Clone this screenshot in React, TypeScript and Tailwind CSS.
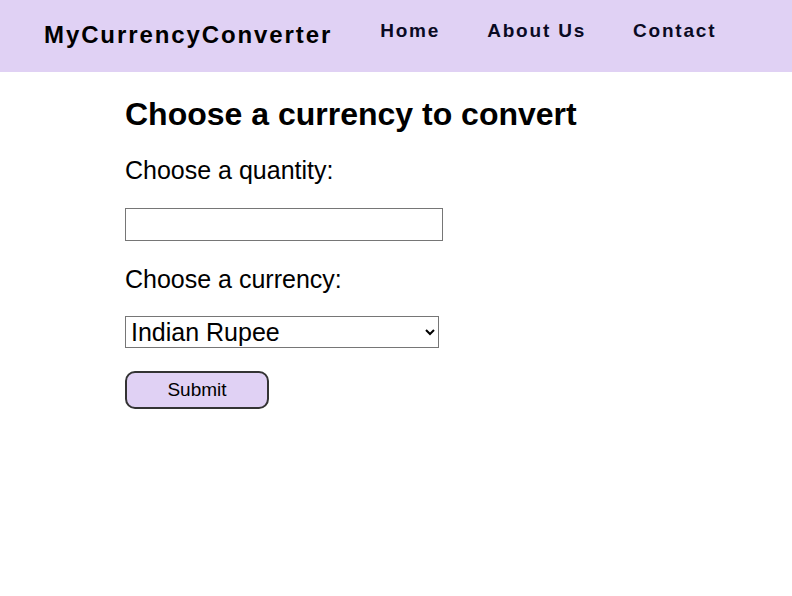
import { useState } from 'react'

const navLinks = ['Home', 'About Us', 'Contact']

const currencies = ['Indian Rupee', 'US Dollar', 'Euro', 'British Pound', 'Japanese Yen']

const App = () => {
  const [quantity, setQuantity] = useState('')
  const [currency, setCurrency] = useState(currencies[0])

  return (
    <div className="min-h-[596px] bg-white font-['Liberation_Sans',Arial,sans-serif] text-black">
      <header className="flex h-[72px] items-start bg-[#e0d1f4] pl-[44px] pt-[21px]">
        <span className="mt-[2px] text-[24px] leading-[24px] font-bold tracking-[1.9px] text-black">
          MyCurrencyConverter
        </span>
        <nav className="ml-[48px] flex gap-[47px]">
          {navLinks.map((link) => (
            <a
              key={link}
              href="#"
              className="text-[19px] leading-[19px] font-bold tracking-[1.8px] text-[#0a0a23]"
            >
              {link}
            </a>
          ))}
        </nav>
      </header>

      <main className="pl-[125px]">
        <h1 className="pt-[26px] text-[32px] leading-[32px] font-bold">Choose a currency to convert</h1>

        <form className="flex flex-col items-start" onSubmit={(e) => e.preventDefault()}>
          <label htmlFor="quantity" className="mt-[28px] text-[25px] leading-[25px]">
            Choose a quantity:
          </label>
          <input
            id="quantity"
            type="text"
            value={quantity}
            onChange={(e) => setQuantity(e.target.value)}
            className="mt-[25px] h-[33px] w-[318px] border border-[#767676] bg-white px-1 text-[16px]"
          />

          <label htmlFor="currency" className="mt-[26px] text-[25px] leading-[25px]">
            Choose a currency:
          </label>
          <select
            id="currency"
            value={currency}
            onChange={(e) => setCurrency(e.target.value)}
            className="mt-[24px] h-[32px] w-[314px] border border-[#767676] bg-white pl-px text-[25px] leading-[25px]"
          >
            {currencies.map((c) => (
              <option key={c} value={c}>
                {c}
              </option>
            ))}
          </select>

          <button
            type="submit"
            className="mt-[23px] h-[38px] w-[144px] rounded-[10px] border-2 border-[#333] bg-[#e0d1f4] text-[19px]"
          >
            Submit
          </button>
        </form>
      </main>
    </div>
  )
}

export default App
